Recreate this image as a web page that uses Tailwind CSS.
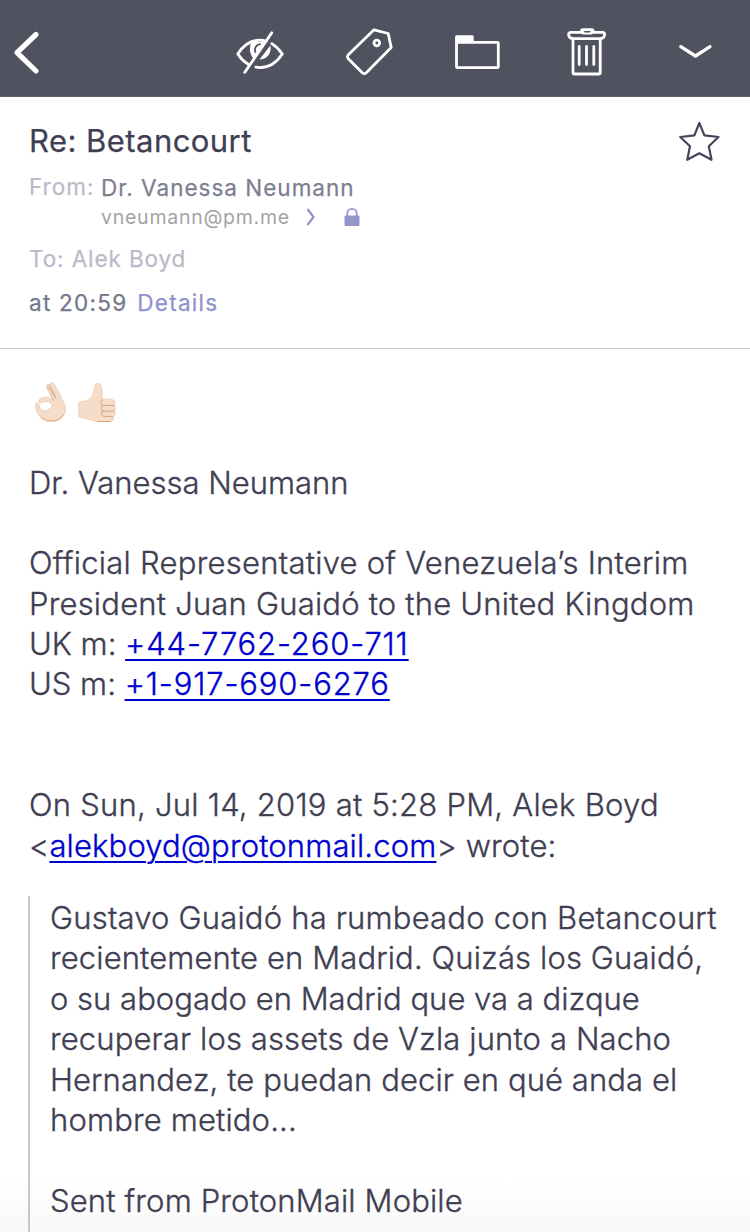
<!DOCTYPE html>
<html lang="en">
<head>
  <meta charset="UTF-8">
  <meta name="viewport" content="width=device-width, initial-scale=1.0">
  <title>Re: Betancourt</title>
  <script src="https://cdn.jsdelivr.net/npm/@tailwindcss/browser@4"></script>
</head>
<body class="w-[750px] h-[1232px] overflow-hidden flex flex-col bg-white font-['Inter','Liberation_Sans',sans-serif] text-[#3f3e52]">
  <!-- Toolbar -->
  <header class="h-[97px] shrink-0 flex items-center pt-2 bg-[#50525f] border-b border-[#5c5b6a] text-white">
    <a href="#" aria-label="Back" class="ml-3">
      <svg class="w-8 h-12" viewBox="12 28 32 48" fill="none" stroke="currentColor" stroke-width="5.2" stroke-linecap="round" stroke-linejoin="round"><path d="M36 34.5 17 52.7 36 71"/></svg>
    </a>
    <a href="#" aria-label="Mark unread" class="ml-[190px]">
      <svg class="w-[52px] h-12" viewBox="234 28 52 48" fill="none" stroke="currentColor" stroke-width="2.8" stroke-linecap="round" stroke-linejoin="round">
        <path d="M248.5 64.5C243.5 61.5 240 57.5 237.8 54 243 45.5 251 40.2 260 40.2 262.5 40.2 264 40.5 266 41.2M271.8 43.6C276.500 46.5 280 50.5 282.3 54 276 63.5 267 69 255.8 67.2"/>
        <path fill="currentColor" stroke="none" d="M252 41.5H267L254.500 59.500C249.500 55.500 248.500 47 252 41.500ZM270.300 45.500C272 53 267 59.500 259.500 59.500Z"/>
        <path stroke="#50525f" stroke-width="1.8" d="M255.300 52C254 48 256.500 44.800 260 44.200"/>
        <path d="M271.800 32.8 244.800 72.3"/>
      </svg>
    </a>
    <a href="#" aria-label="Label" class="ml-[58px]">
      <svg class="w-[52px] h-12" viewBox="344 28 52 48" fill="none" stroke="currentColor" stroke-width="2.8" stroke-linecap="round" stroke-linejoin="round">
        <path d="M374 29.8 388.2 33.5 391.2 47.5 366.3 72.8Q364.3 74.5 362.3 72.8L348.3 58.8Q346.6 56.8 348.3 54.8Z"/>
        <circle cx="376.8" cy="43" r="2.8"/>
      </svg>
    </a>
    <a href="#" aria-label="Move to folder" class="ml-14">
      <svg class="w-[52px] h-12" viewBox="452 28 52 48" fill="none" stroke="currentColor" stroke-width="2.8" stroke-linejoin="round">
        <rect x="456.5" y="42.3" width="41.8" height="25.4" rx="1"/>
        <path fill="currentColor" stroke="none" d="M455.1 43V36.7Q455.1 35.2 456.6 35.2H472.2Q473.7 35.2 473.7 36.7V43Z"/>
      </svg>
    </a>
    <a href="#" aria-label="Delete" class="ml-14">
      <svg class="w-[52px] h-12" viewBox="560 28 52 48" fill="none" stroke="currentColor" stroke-width="2.8" stroke-linecap="round" stroke-linejoin="round">
        <path d="M581.5 32.3V30.9Q581.5 29.6 582.8 29.6H591.8Q593.1 29.6 593.1 30.9V32.3"/>
        <path d="M583 32.3H571Q568.6 32.3 568.6 34.6 569 38.6 573.5 38.6H600Q604.2 38.6 604.6 34.6 604.6 32.3 602.5 32.3H591.5"/>
        <path stroke-width="2" d="M583 33.5H591.5"/>
        <path d="M573 39V72.5Q573 74 574.5 74H598.7Q600.2 74 600.2 72.5V39M579.2 46.5V64.5M586.5 46.5V64.5M593.8 46.5V64.5"/>
      </svg>
    </a>
    <a href="#" aria-label="More" class="ml-[58px]">
      <svg class="w-[52px] h-12" viewBox="670 28 52 48" fill="none" stroke="currentColor" stroke-width="3.3" stroke-linecap="round" stroke-linejoin="round"><path d="M680.8 46.7 695.5 56 710 46.7"/></svg>
    </a>
  </header>

  <!-- Message details -->
  <section class="h-[252px] shrink-0 flex justify-between pl-[29px] pr-[27px] border-b border-[#c8c8ca] whitespace-nowrap">
    <div class="[-webkit-text-stroke:0.25px]">
      <h1 class="mt-6 h-10 leading-10 text-[31px] tracking-[0.45px]">Re: Betancourt</h1>
      <div class="mt-3 flex text-[22.5px] tracking-[1px] leading-7">
        <span class="w-[72px] text-[#babbc9]">From:</span>
        <div>
          <div class="mt-px h-[29px] text-[#7c7f91]">Dr. Vanessa Neumann</div>
          <div class="flex items-center h-7 text-[19.5px] tracking-[0.75px] text-[#a3a3a6] [-webkit-text-stroke:0]">
            <span>vneumann@pm.me</span>
            <svg class="ml-[15px] w-3 h-5" viewBox="0 0 12 20" fill="none" stroke="#8f92cd" stroke-width="2.2"><path d="M2.5 2 8.5 10 2.5 18"/></svg>
            <svg class="ml-[27px] w-4 h-5" viewBox="0 0 16 20"><path fill="none" stroke="#9496cb" stroke-width="1.8" d="M3.3 10V6.5a4.7 4.7 0 0 1 9.4 0V10"/><rect x="0.5" y="8.5" width="15" height="10.5" rx="1.2" fill="#9496cb"/></svg>
          </div>
        </div>
      </div>
      <div class="mt-[14px] leading-7 text-[22.5px] tracking-[0.9px] text-[#babbc9]">To: Alek Boyd</div>
      <div class="mt-4 flex gap-[10px] leading-7 text-[22.5px] tracking-[1.25px] text-[#73778a]">
        <span>at 20:59</span>
        <a href="#" class="text-[#8f92cd]">Details</a>
      </div>
    </div>
    <svg class="mt-[21px] w-12 h-12" viewBox="675 118 48 48" fill="none" stroke="#45445a" stroke-width="2.2" stroke-linejoin="round"><path d="M699.3 123 704.4 135.3 718.5 137 708.8 146.3 711.5 159.8 699.3 153.3 687.3 159.8 690 146.3 680.2 137 694.4 135.3Z"/></svg>
  </section>

  <!-- Message body -->
  <main class="flex-1 flex flex-col pl-[29px] pt-[33px] text-[31px] leading-[40.35px] font-light whitespace-nowrap [-webkit-text-stroke:0.35px] bg-[linear-gradient(to_bottom,transparent_94%,#f8f8f8)]">
    <div class="h-[80.7px] flex gap-3 pl-1.5">
      <svg class="w-8 h-[42px]" viewBox="0 0 32 42" aria-label="OK hand">
        <path fill="#ecceb5" d="M11 5Q11 2 14 2L21 9 24 19H18Z"/>
        <path fill="#f5ddca" stroke="#e2bda0" stroke-width=".6" d="M19 19C18 13 13 9 12 5 12 3 14 3 15 4L21 13 15 3C15 0 18 0 19 2L25 12C26 18 30 21 30.5 25 31 34 25 39.5 17 39.5 9 40 5 36 2.5 31 1 28-.5 22 1.500 21 3 20 4 22 4.500 25 6 29 10 29.5 13 28 17 26 18 23.5 16 21.5 13 18.5 9 19 6 21 4 21 3 19.5 4 18 7 14.5 15 14 19 19Z"/>
        <path fill="none" stroke="#c99a78" stroke-width="1" d="M14 5 21 16"/>
        <path fill="none" stroke="#dcb08e" stroke-width="1" d="M6 35Q10 39 17 39 25 39 29 32"/>
      </svg>
      <svg class="w-[39px] h-[42px] -ml-px" viewBox="0 0 40 42" aria-label="Thumbs up">
        <path fill="#f5ddca" stroke="#e2bda0" stroke-width=".6" d="M1 20Q0 28 1 35 7 37 12 38 17 41 26 40H33Q37 39 36.5 35 39 32 37.5 29 40 26 37.5 23.5 39 18 35 17.5 31 16.5 24.5 17 26 10 24 4 23 0 20 1 17 1 17 5 17 11 13 16 9 20 1 20Z"/>
        <path fill="none" stroke="#d3a27e" stroke-width="1" d="M24.500 18Q22 22 25 23.500H37M25 23.500Q23 27 25 29.300H37M25 29.300Q23 33 26 34.800H36M20 40H33"/>
      </svg>
    </div>
    <p>Dr. Vanessa Neumann</p>
    <p class="mt-[40.35px] tracking-[0.25px]">Official Representative of Venezuela’s Interim</p>
    <p class="tracking-[0.2px]">President Juan Guaidó to the United Kingdom</p>
    <p>UK m: <a href="#" class="text-[#0000d0] underline decoration-2 underline-offset-4 tracking-[0.85px]">+44-7762-260-711</a></p>
    <p>US m: <a href="#" class="text-[#0000d0] underline decoration-2 underline-offset-4 tracking-[0.85px]">+1-917-690-6276</a></p>
    <p class="mt-[80.7px] tracking-[0.24px]">On Sun, Jul 14, 2019 at 5:28 PM, Alek Boyd</p>
    <p class="tracking-[0.14px]">&lt;<a href="#" class="text-[#0000d0] underline decoration-2 underline-offset-4">alekboyd@protonmail.com</a>&gt; wrote:</p>
    <blockquote class="mt-[30px] -ml-px pt-[2px] flex-1 pl-5 border-l-2 border-[#c8c8ca]">
      <p class="tracking-[0.19px]">Gustavo Guaidó ha rumbeado con Betancourt</p>
      <p class="tracking-[0.12px]">recientemente en Madrid. Quizás los Guaidó,</p>
      <p class="tracking-[0.01px]">o su abogado en Madrid que va a dizque</p>
      <p class="tracking-[0.12px]">recuperar los assets de Vzla junto a Nacho</p>
      <p class="tracking-[0.08px]">Hernandez, te puedan decir en qué anda el</p>
      <p class="tracking-[0.15px]">hombre metido...</p>
      <p class="mt-[40.35px] tracking-[0.15px]">Sent from ProtonMail Mobile</p>
    </blockquote>
  </main>
</body>
</html>
